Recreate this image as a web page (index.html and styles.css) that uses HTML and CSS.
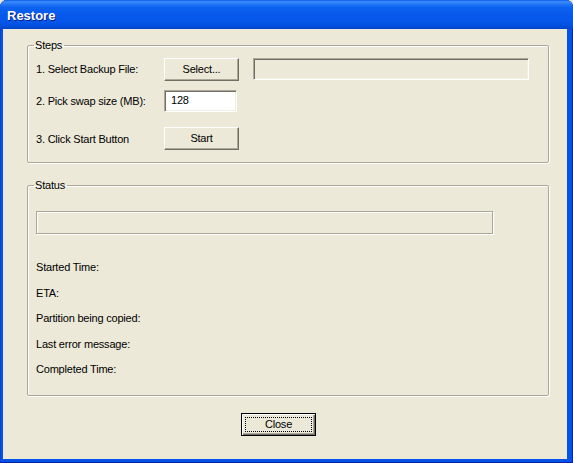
FILE: index.html
```html
<!DOCTYPE html>
<html>
<head>
<meta charset="utf-8">
<link rel="stylesheet" href="styles.css">
</head>
<body>
<div class="window">
  <div class="titlebar"><span class="title">Restore</span></div>
  <div class="client">
    <fieldset class="group steps">
      <legend>Steps</legend>
      <div class="row row1">
        <span class="label">1. Select Backup File:</span>
        <div class="btn"><span>Select...</span></div>
        <div class="field disabled"></div>
      </div>
      <div class="row row2">
        <span class="label">2. Pick swap size (MB):</span>
        <div class="edit">128</div>
      </div>
      <div class="row row3">
        <span class="label">3. Click Start Button</span>
        <div class="btn"><span>Start</span></div>
      </div>
    </fieldset>
    <fieldset class="group status">
      <legend>Status</legend>
      <div class="progress"></div>
      <div class="info">
        <div class="line">Started Time:</div>
        <div class="line">ETA:</div>
        <div class="line">Partition being copied:</div>
        <div class="line">Last error message:</div>
        <div class="line">Completed Time:</div>
      </div>
    </fieldset>
    <div class="footer">
      <div class="btn default"><span class="focus">Close</span></div>
    </div>
  </div>
</div>
</body>
</html>
```
FILE: styles.css
```css
html, body {
  margin: 0;
  padding: 0;
  width: 573px;
  height: 463px;
  overflow: hidden;
  background: #ECE9D8;
}
.window {
  width: 573px;
  height: 463px;
  box-sizing: border-box;
  display: flex;
  flex-direction: column;
  background: #0553E6;
  border-radius: 7px 7px 0 0;
  box-shadow: inset -1px 0 0 #0021A8, inset 0 -1px 0 #0021A8, inset 1px 0 0 #0A3FD0;
  font-family: "Liberation Sans", Arial, sans-serif;
  font-size: 11px;
  color: #000;
}
.titlebar {
  height: 29px;
  box-sizing: border-box;
  padding: 7px 0 0 7px;
  border-radius: 7px 7px 0 0;
  background: linear-gradient(to bottom, #0A5AE8 0%, #3C8EFB 6%, #2A7DF8 12%, #0C63EE 25%, #0758EC 50%, #0556E9 75%, #0350DD 90%, #0442C4 100%);
}
.title {
  color: #fff;
  font-weight: bold;
  font-size: 13px;
  line-height: 18px;
  text-shadow: 1px 1px 0 #0A1F80;
}
.client {
  margin: 0 6px 4px 3px;
  flex: 1;
  background: #ECE9D8;
  padding: 10px 0 0 24px;
  box-sizing: border-box;
  letter-spacing: -0.2px;
}
.group {
  margin: 0;
  width: 522px;
  box-sizing: border-box;
  border: 1px solid #ACA899;
  box-shadow: inset 1px 1px 0 #fff, 1px 1px 0 #fff;
  border-radius: 2px;
  padding: 6px 0 12px 8px;
}
.group legend {
  padding: 0 2px 0 1px;
  margin-left: -2px;
  line-height: 13px;
  font-size: 11px;
}
.row {
  display: flex;
  align-items: center;
}
.row1 { height: 23px; align-items: flex-start; }
.row1 .label { line-height: 23px; }
.row2 { height: 22px; margin-top: 9px; }
.row3 { height: 23px; margin-top: 15px; }
.label {
  width: 128px;
  flex: none;
  white-space: nowrap;
}
.btn {
  width: 75px;
  height: 23px;
  box-sizing: border-box;
  flex: none;
  border: 1px solid;
  border-color: #fff #716F64 #716F64 #fff;
  box-shadow: inset -1px -1px 0 #ACA899;
  background: #ECE9D8;
  display: flex;
  align-items: center;
  justify-content: center;
  line-height: 13px;
  padding-bottom: 1px;
}
.field {
  width: 276px;
  height: 22px;
  box-sizing: border-box;
  margin-left: 14px;
  border: 1px solid;
  border-color: #ACA899 #fff #fff #ACA899;
  box-shadow: inset 1px 1px 0 #716F64, inset -1px -1px 0 #F1EFE2;
  background: #ECE9D8;
}
.edit {
  width: 73px;
  height: 22px;
  box-sizing: border-box;
  border: 1px solid;
  border-color: #ACA899 #fff #fff #ACA899;
  box-shadow: inset 1px 1px 0 #716F64, inset -1px -1px 0 #F1EFE2;
  background: #fff;
  padding: 3px 0 0 6px;
  line-height: 13px;
}
.status {
  margin-top: 16px;
  padding: 19px 0 19px 8px;
}
.progress {
  width: 457px;
  height: 23px;
  box-sizing: border-box;
  border: 1px solid #ACA899;
  box-shadow: inset 1px 1px 0 #fff, 1px 1px 0 #fff;
}
.info {
  margin-top: 27px;
  display: flex;
  flex-direction: column;
  gap: 12.5px;
}
.line {
  line-height: 13px;
}
.footer {
  margin: 17px 0 0 214px;
}
.btn.default {
  border: 1px solid #000;
  box-shadow: inset 1px 1px 0 #fff, inset -1px -1px 0 #716F64, inset -2px -2px 0 #ACA899;
  padding: 3px;
}
.focus {
  flex: 1;
  align-self: stretch;
  border: 1px dotted #000;
  display: flex;
  align-items: center;
  justify-content: center;
}
```
